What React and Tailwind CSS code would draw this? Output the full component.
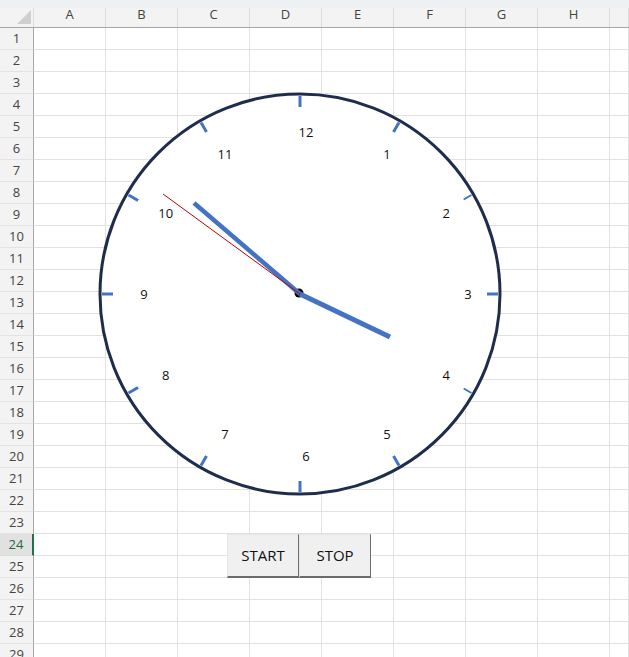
const COLS = ['A', 'B', 'C', 'D', 'E', 'F', 'G', 'H', ''];
const ROWS = Array.from({ length: 29 }, (_, i) => i + 1);
const SELECTED_ROW = 24;

// clock geometry, in page pixels
const CX = 300;
const CY = 294;
const R = 200;

const rad = (deg) => (deg * Math.PI) / 180;
const polar = (deg, r, cx = CX, cy = CY) => [cx + r * Math.sin(rad(deg)), cy - r * Math.cos(rad(deg))];

function ClockFace() {
  const hours = Array.from({ length: 12 }, (_, i) => i + 1);
  return (
    <svg className="absolute left-0 top-0 pointer-events-none" width="629" height="657" viewBox="0 0 629 657">
      <circle cx={CX} cy={CY} r={R} fill="#ffffff" stroke="#1f2d4d" strokeWidth="3" />

      {/* tick marks */}
      {hours.map((h) => {
        const [x1, y1] = polar(h * 30, h === 2 || h === 4 ? 189 : 187);
        const [x2, y2] = polar(h * 30, 198);
        return (
          <line
            key={h}
            x1={x1}
            y1={y1}
            x2={x2}
            y2={y2}
            stroke="#4472c4"
            strokeWidth={h === 2 || h === 4 ? 2 : 3}
          />
        );
      })}

      {/* numbers */}
      {hours.map((h) => {
        const [x, y] = polar(h * 30, 162, 306, 294);
        return (
          <text
            key={h}
            x={x}
            y={y}
            textAnchor="middle"
            dominantBaseline="central"
            fontSize="13"
            fill="#111"
            fontFamily="'Open Sans', sans-serif"
          >
            {h}
          </text>
        );
      })}

      <circle cx="299" cy="293" r="4.5" fill="#000" />
      {/* hour, minute, second */}
      <line x1={CX} y1={CY} x2="390" y2="337" stroke="#4472c4" strokeWidth="5" />
      <line x1={CX} y1={CY} x2="194" y2="203" stroke="#4472c4" strokeWidth="4.5" />
      <line x1={CX} y1={CY} x2="163" y2="194" stroke="#c00000" strokeWidth="1" />
    </svg>
  );
}

function SheetButton({ children }) {
  return (
    <button className="w-[72px] h-[44px] flex items-center justify-center bg-[#f0f0f0] border border-t-[#e6e6e6] border-l-[#e6e6e6] border-r-[#6b6b6b] border-b-2 border-b-[#6b6b6b] text-[15px] text-[#111] font-['Open_Sans',sans-serif]">
      {children}
    </button>
  );
}

export default function App() {
  return (
    <div className="relative w-[629px] h-[657px] overflow-hidden bg-white font-['Open_Sans',sans-serif]">
      <div className="h-[8px] bg-[#eef1f4]" />

      {/* column headers */}
      <div className="grid grid-cols-[34px_repeat(8,72px)_1fr] h-[20px] bg-[#f3f3f3] border-b border-[#a6a6a6]">
        <div className="relative border-r border-[#dcdcdc]">
          <svg className="absolute left-0 -top-[8px]" width="33" height="27" viewBox="0 0 33 27">
            <polygon points="31,10 31,24 17,24" fill="#cfcfcf" />
          </svg>
        </div>
        {COLS.map((c, i) => (
          <div key={i} className="flex justify-center border-r border-[#dcdcdc] text-[13px] leading-[13px] text-[#444]">
            {c}
          </div>
        ))}
      </div>

      {/* rows */}
      {ROWS.map((r) => {
        const sel = r === SELECTED_ROW;
        return (
          <div key={r} className="grid grid-cols-[34px_repeat(8,72px)_1fr] h-[22px]">
            <div
              className={
                sel
                  ? 'flex items-center justify-center pt-[1px] bg-[#e1e1e1] border-b border-b-[#dcdcdc] border-r-2 border-r-[#217346] text-[13px] text-[#1d6b40]'
                  : 'flex items-center justify-center pt-[1px] bg-[#f3f3f3] border-b border-b-[#e3e3e3] border-r border-r-[#a6a6a6] text-[13px] text-[#444]'
              }
            >
              {r}
            </div>
            {COLS.map((_, i) => (
              <div key={i} className="border-r border-b border-[#e1e1e1]" />
            ))}
          </div>
        );
      })}

      <ClockFace />

      <div className="absolute left-[227px] top-[534px] flex">
        <SheetButton>START</SheetButton>
        <SheetButton>STOP</SheetButton>
      </div>
    </div>
  );
}
